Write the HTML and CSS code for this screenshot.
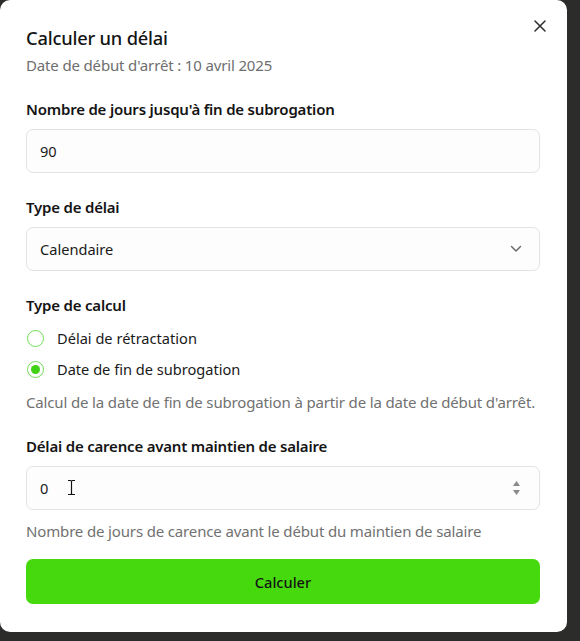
FILE: index.html
```html
<!DOCTYPE html>
<html lang="fr">
<head>
<meta charset="utf-8">
<title>Calculer un délai</title>
<link rel="stylesheet" href="styles.css">
</head>
<body>
<div class="modal">
  <button class="close" aria-label="Fermer">
    <svg width="12" height="12" viewBox="0 0 12 12"><path d="M1 1L11 11M11 1L1 11" stroke="#2b2b2b" stroke-width="1.5" stroke-linecap="round"/></svg>
  </button>
  <header class="head">
    <h1 class="title">Calculer un délai</h1>
    <p class="subtitle">Date de début d'arrêt : 10 avril 2025</p>
  </header>
  <form class="form">
    <div class="field">
      <label class="label">Nombre de jours jusqu'à fin de subrogation</label>
      <div class="input">90</div>
    </div>
    <div class="field">
      <label class="label">Type de délai</label>
      <div class="input select">
        <span>Calendaire</span>
        <svg width="12" height="8" viewBox="0 0 12 8"><path d="M1.5 1.5L6 6L10.5 1.5" fill="none" stroke="#6b6b6b" stroke-width="1.5" stroke-linecap="round" stroke-linejoin="round"/></svg>
      </div>
    </div>
    <div class="field">
      <label class="label">Type de calcul</label>
      <div class="radios">
        <div class="radio"><span class="dot"></span>Délai de rétractation</div>
        <div class="radio"><span class="dot on"></span>Date de fin de subrogation</div>
      </div>
      <p class="help help-radio">Calcul de la date de fin de subrogation à partir de la date de début d'arrêt.</p>
    </div>
    <div class="field">
      <label class="label">Délai de carence avant maintien de salaire</label>
      <div class="input number">
        <span>0</span>
        <svg class="spin" width="9" height="16" viewBox="0 0 9 16"><path d="M4.5 1L8 6H1Z" fill="#8a8a8a"/><path d="M4.5 15L8 10H1Z" fill="#8a8a8a"/></svg>
        <svg class="ibeam" width="9" height="17" viewBox="0 0 9 17"><path d="M1 1.5H3.5Q4.5 1.5 4.5 2.5V14.5Q4.5 15.5 3.5 15.5H1M8 1.5H5.5Q4.5 1.5 4.5 2.5M4.5 14.5Q4.5 15.5 5.5 15.5H8" fill="none" stroke="#fff" stroke-width="3"/><path d="M1 1.5H3.5Q4.5 1.5 4.5 2.5V14.5Q4.5 15.5 3.5 15.5H1M8 1.5H5.5Q4.5 1.5 4.5 2.5M4.5 14.5Q4.5 15.5 5.5 15.5H8" fill="none" stroke="#111" stroke-width="1.2"/></svg>
      </div>
      <p class="help help-input">Nombre de jours de carence avant le début du maintien de salaire</p>
    </div>
    <button type="button" class="submit">Calculer</button>
  </form>
</div>
</body>
</html>
```
FILE: styles.css
```css
* { box-sizing: border-box; }
html, body { margin: 0; padding: 0; }
body {
  width: 580px;
  height: 641px;
  background: #2c2d2a;
  font-family: "Noto Sans", "Open Sans", sans-serif;
  color: #141414;
  overflow: hidden;
}
.modal {
  position: relative;
  width: 567px;
  height: 632px;
  background: #ffffff;
  border-radius: 10px;
  padding: 26px 27px 0 26px;
}
.close {
  position: absolute;
  top: 20px;
  right: 21px;
  width: 12px;
  height: 12px;
  padding: 0;
  border: 0;
  background: none;
  display: flex;
}
.head { display: flex; flex-direction: column; gap: 5px; }
.title {
  margin: 0;
  font-size: 18.3px;
  line-height: 24px;
  font-weight: 500;
  letter-spacing: -0.2px;
  color: #141414;
}
.subtitle {
  margin: 0;
  font-size: 15px;
  line-height: 20px;
  color: #6e6e6e;
  letter-spacing: -0.15px;
}
.form {
  display: flex;
  flex-direction: column;
  gap: 24px;
  margin-top: 24px;
}
.field { display: flex; flex-direction: column; gap: 10px; }
.label {
  font-size: 15px;
  line-height: 20px;
  font-weight: 600;
  letter-spacing: -0.2px;
  color: #141414;
}
.input {
  height: 44px;
  border: 1px solid #e3e3e3;
  border-radius: 7px;
  background: #fdfdfd;
  padding: 0 13px;
  display: flex;
  align-items: center;
  font-size: 14.6px;
  color: #1a1a1a;
}
.select { justify-content: space-between; padding-right: 17px; }
.number { position: relative; justify-content: space-between; padding-right: 18px; }
.ibeam { position: absolute; left: 40px; top: 12px; }
.radios { display: flex; flex-direction: column; gap: 11px; margin-top: 3px; }
.radio {
  display: flex;
  align-items: center;
  gap: 13px;
  font-size: 14.6px;
  line-height: 20px;
  color: #1a1a1a;
  padding-left: 1px;
}
.dot {
  width: 17px;
  height: 17px;
  border-radius: 50%;
  border: 1.5px solid #6fdc55;
  display: flex;
  align-items: center;
  justify-content: center;
}
.dot.on::after {
  content: "";
  width: 9px;
  height: 9px;
  border-radius: 50%;
  background: #3fd214;
}
.help {
  margin: 0;
  font-size: 15px;
  line-height: 20px;
  color: #717171;
  letter-spacing: -0.15px;
}
.help-radio { margin-top: 3px; }
.help-input { margin-top: 1px; }
.submit {
  margin-top: -6px;
  height: 45px;
  border: 0;
  border-radius: 7px;
  background: #46d90d;
  font-family: inherit;
  font-size: 14.6px;
  font-weight: 500;
  color: #141414;
}
```
